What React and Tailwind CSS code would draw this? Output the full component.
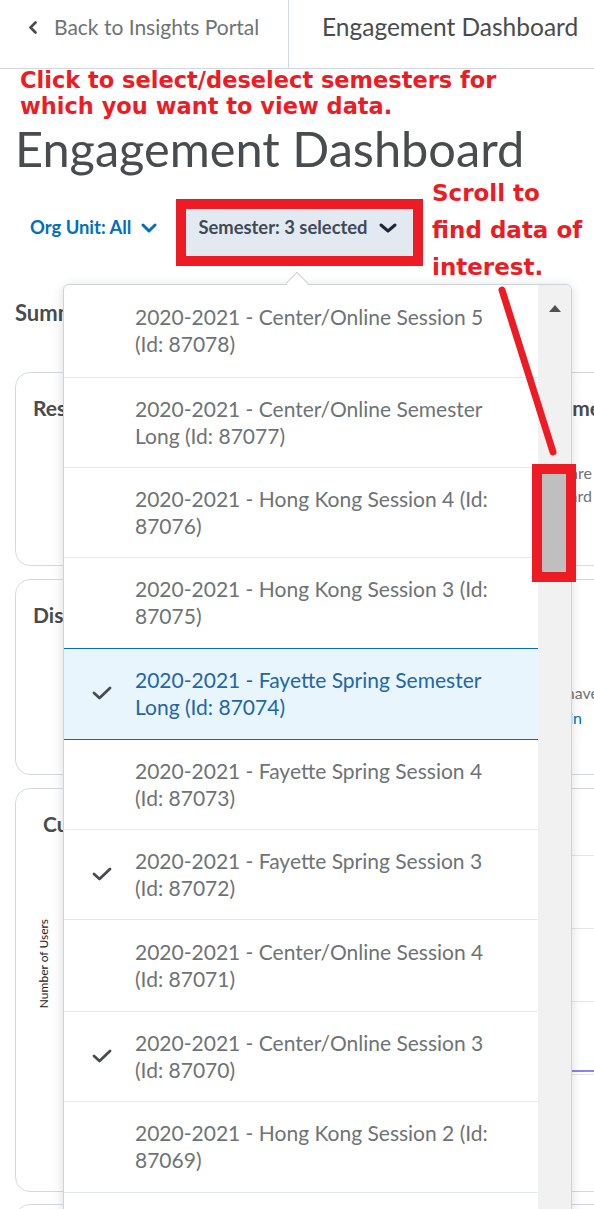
import React from "react";

const semesters = [
  { a: "2020-2021 - Center/Online Session 5", b: "(Id: 87078)", h: "h-[92px]" },
  { a: "2020-2021 - Center/Online Semester", b: "Long (Id: 87077)", h: "h-[90px]" },
  { a: "2020-2021 - Hong Kong Session 4 (Id:", b: "87076)", h: "h-[90px]" },
  { a: "2020-2021 - Hong Kong Session 3 (Id:", b: "87075)", h: "h-[91px]" },
  { a: "2020-2021 - Fayette Spring Semester", b: "Long (Id: 87074)", h: "h-[91px]", checked: true, active: true },
  { a: "2020-2021 - Fayette Spring Session 4", b: "(Id: 87073)", h: "h-[90px]" },
  { a: "2020-2021 - Fayette Spring Session 3", b: "(Id: 87072)", h: "h-[90px]", checked: true },
  { a: "2020-2021 - Center/Online Session 4", b: "(Id: 87071)", h: "h-[92px]" },
  { a: "2020-2021 - Center/Online Session 3", b: "(Id: 87070)", h: "h-[90px]", checked: true },
  { a: "2020-2021 - Hong Kong Session 2 (Id:", b: "87069)", h: "h-[91px]" },
  { a: "2020-2021 - Hong Kong Session 1", b: "(Id: 87068)", h: "h-[90px]" },
];

function ChevronLeft() {
  return (
    <svg width="10" height="13" viewBox="0 0 10 13" className="shrink-0">
      <polyline points="7.5,1.5 2.5,6.5 7.5,11.5" fill="none" stroke="#494c4e" strokeWidth="2.6" strokeLinecap="round" strokeLinejoin="round" />
    </svg>
  );
}

function ChevronDown({ color, w = 16 }) {
  return (
    <svg width={w} height="10" viewBox={`0 0 ${w} 10`} className="shrink-0">
      <polyline points={`2,2 ${w / 2},8 ${w - 2},2`} fill="none" stroke={color} strokeWidth="3" strokeLinecap="round" strokeLinejoin="round" />
    </svg>
  );
}

function Check() {
  return (
    <svg width="20" height="14" viewBox="0 0 20 14">
      <polyline points="2,7 7.5,12 18,2" fill="none" stroke="#494c4e" strokeWidth="2.8" strokeLinecap="round" strokeLinejoin="round" />
    </svg>
  );
}

function SemesterMenu() {
  return (
    <div className="absolute left-[63px] top-[284px] h-[960px] w-[509px] rounded-[6px] border border-[#cdd3da] bg-white shadow-[0_2px_12px_rgba(0,0,0,0.14)]">
      {/* pointer toward the opener */}
      <div className="absolute left-[225px] top-[-10px] h-[16px] w-[16px] rotate-45 border-l border-t border-[#cdd3da] bg-white" />
      <div className="relative flex h-full overflow-hidden rounded-[6px]">
        <ul className="flex-1">
          {semesters.map((s, i) => {
            const prevActive = i > 0 && semesters[i - 1].active;
            const line = s.active || prevActive ? "border-[#006fbf]" : "border-[#e3e9f1]";
            return (
              <li
                key={s.b}
                className={`flex items-center pb-[2px] ${s.h} ${i > 0 ? "border-t" : ""} ${line} ${s.active ? "bg-[#e8f5fc]" : ""}`}
              >
                <span className="flex w-[71px] shrink-0 justify-center pl-[5px]">{s.checked && <Check />}</span>
                <span className={`whitespace-nowrap text-[21px] leading-[27px] ${s.active ? "text-[#2266aa]" : "text-[#6e7376]"}`}>
                  {s.a}
                  <br />
                  {s.b}
                </span>
              </li>
            );
          })}
        </ul>
        {/* scrollbar track */}
        <div className="relative w-[33px] shrink-0 bg-[#f1f1f1]">
          <svg width="14" height="8" viewBox="0 0 14 8" className="absolute left-[10px] top-[20px]">
            <polygon points="7,0 13,7 1,7" fill="#505050" />
          </svg>
        </div>
      </div>
      {/* scroll thumb, outlined */}
      <div className="absolute left-[468px] top-[179px] h-[118px] w-[44px] border-[10px] border-[#ed1c24] bg-[#bfbfbf]" />
    </div>
  );
}

export default function App() {
  return (
    <div className="relative h-[1209px] w-[594px] overflow-hidden bg-white font-['Lato',sans-serif]">
      <header className="flex h-[69px] border-b border-[#d3d9e3]">
        <a className="flex w-[289px] shrink-0 items-center gap-[16px] border-r border-[#d3d9e3] pb-[14px] pl-[28px] text-[21px] text-[#6e7376]">
          <ChevronLeft />
          <span>Back to Insights Portal</span>
        </a>
        <div className="flex items-center pb-[14px] pl-[33px] text-[24.5px] text-[#494c4e]">Engagement Dashboard</div>
      </header>

      <main className="px-[15px]">
        <p className="-mt-[2px] pl-[5px] font-['DejaVu_Sans',sans-serif] text-[22.5px] font-bold leading-[26px] text-[#ed1c24]">
          Click to select/deselect semesters for
          <br />
          which you want to view data.
        </p>

        <h1 className="mt-[1px] text-[48.7px] font-normal leading-[56px] text-[#494c4e]">Engagement Dashboard</h1>

        <div className="relative mt-[23px] flex items-center">
          <button className="flex items-center gap-[10px] pb-[9px] pl-[15px] text-[18.4px] font-bold text-[#006fbf]">
            Org Unit: All
            <ChevronDown color="#006fbf" />
          </button>
          <div className="ml-[19px] border-[10px] border-[#ed1c24]">
            <button className="flex h-[47px] w-[227px] items-center gap-[11px] bg-[#e3e9f1] pb-[9px] pl-[12px] text-[18.4px] font-bold text-[#3f4a57]">
              Semester: 3 selected
              <ChevronDown color="#1d2a3a" w={18} />
            </button>
          </div>
          <p className="absolute left-[417px] top-[-24px] whitespace-nowrap font-['DejaVu_Sans',sans-serif] text-[23px] font-bold leading-[37px] text-[#ed1c24]">
            Scroll to
            <br />
            find data of
            <br />
            interest.
          </p>
        </div>

        <h2 className="mt-[33px] text-[22px] font-bold leading-[28px] text-[#494c4e]">Summary</h2>

        <div className="mt-[45px] flex gap-[12px]">
          <section className="h-[194px] w-[380px] shrink-0 rounded-[15px] border border-[#d3d9e3] pl-[17px] pt-[22px]">
            <h3 className="text-[21px] font-bold leading-[26px] text-[#494c4e]">Results</h3>
          </section>
          <section className="h-[194px] w-[400px] shrink-0 rounded-[15px] border border-[#d3d9e3] pl-[17px] pt-[22px]">
            <h3 className="text-[21px] font-bold leading-[26px] text-[#494c4e]">Overdue Assignments</h3>
            <p className="mt-[40px] w-[167px] text-right text-[16px] leading-[23px] text-[#6e7376]">
              <span className="block whitespace-nowrap">learners who are</span>
              <span className="block whitespace-nowrap">shown on this card</span>
            </p>
          </section>
        </div>

        <div className="mt-[13px] flex gap-[12px]">
          <section className="h-[196px] w-[380px] shrink-0 rounded-[15px] border border-[#d3d9e3] pl-[17px] pt-[22px]">
            <h3 className="text-[21px] font-bold leading-[26px] text-[#494c4e]">Discussion Activity</h3>
          </section>
          <section className="h-[196px] w-[400px] shrink-0 rounded-[15px] border border-[#d3d9e3] pl-[17px] pt-[22px]">
            <h3 className="text-[21px] font-bold leading-[26px] text-[#494c4e]">System Access</h3>
            <p className="mt-[52px] text-[16px] leading-[25px] text-[#6e7376]">
              <span className="block w-[174px] whitespace-nowrap text-right">learners who have</span>
              <span className="block w-[157px] whitespace-nowrap text-right">
                not logged <span className="text-[#006fbf]">in</span>
              </span>
            </p>
          </section>
        </div>

        <section className="mt-[13px] h-[404px] w-[780px] rounded-[15px] border border-[#d3d9e3] pt-[22px]">
          <h3 className="pl-[27px] text-[21px] font-bold leading-[26px] text-[#494c4e]">Current Grade</h3>
          <div className="mt-[7px] flex">
            <div className="ml-[14px] flex h-[240px] w-[28px] items-center justify-center">
              <span className="rotate-180 text-[12px] text-[#202122] [writing-mode:vertical-rl]">Number of Users</span>
            </div>
            <svg width="700" height="330" viewBox="0 0 700 330" className="ml-[10px]">
              <g stroke="#e6e6e6" strokeWidth="1">
                <line x1="0" y1="11.5" x2="700" y2="11.5" />
                <line x1="0" y1="84.5" x2="700" y2="84.5" />
                <line x1="0" y1="157.5" x2="700" y2="157.5" />
                <line x1="0" y1="230.5" x2="700" y2="230.5" />
              </g>
              <polyline points="0,200 120,190 240,210 360,228 480,227 700,227" fill="none" stroke="#8b80f0" strokeWidth="2" />
            </svg>
          </div>
        </section>

        <section className="mt-[12px] h-[100px] w-[780px] rounded-[15px] border border-[#d3d9e3]" />
      </main>

      <SemesterMenu />

      {/* annotation stroke pointing at the scroll thumb */}
      <svg className="pointer-events-none absolute left-0 top-0" width="594" height="1209">
        <line x1="502" y1="290" x2="553" y2="452" stroke="#ed1c24" strokeWidth="7" strokeLinecap="round" />
      </svg>
    </div>
  );
}
